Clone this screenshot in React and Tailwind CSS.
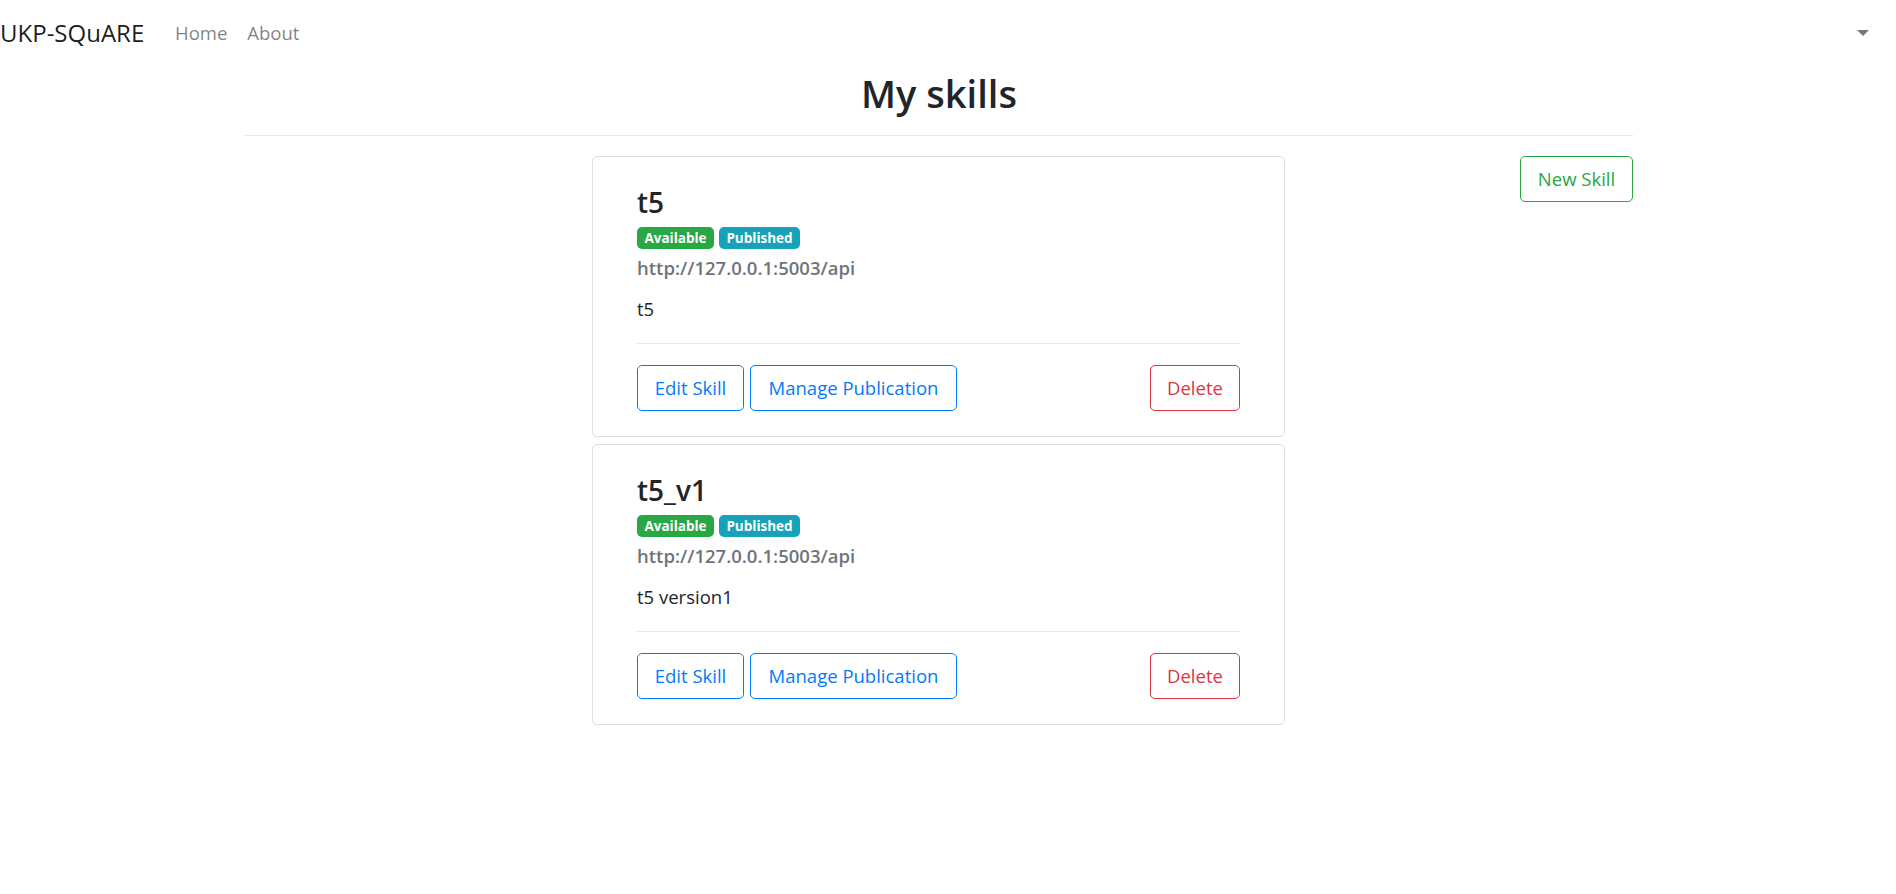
import React from "react";

const skills = [
    { name: "t5", url: "http://127.0.0.1:5003/api", description: "t5" },
    { name: "t5_v1", url: "http://127.0.0.1:5003/api", description: "t5 version1" },
];

const SkillCard = ({ skill }) => (
    <div className="border border-[#dfdfdf] rounded-[5px] bg-white px-[44px] pt-[28px] pb-[25px]">
        <h4 className="text-[28px] leading-[35px] font-semibold text-[#212529]">{skill.name}</h4>
        <div className="flex gap-[5px] mt-[7px]">
            <span className="h-[22px] w-[77px] flex items-center justify-center rounded-[5px] bg-[#28a745] text-white text-[13.5px] font-bold">
                Available
            </span>
            <span className="h-[22px] w-[81px] flex items-center justify-center rounded-[5px] bg-[#17a2b8] text-white text-[13.5px] font-bold">
                Published
            </span>
        </div>
        <div className="mt-[4px] text-[18.5px] leading-[29px] font-semibold text-[#6c757d]">{skill.url}</div>
        <p className="mt-[12px] text-[18.5px] leading-[29px] text-[#212529]">{skill.description}</p>
        <hr className="mt-[20px] border-0 border-t border-[#e5e5e5]" />
        <div className="flex items-center mt-[21px]">
            <button className="w-[107px] h-[46px] border border-[#007bff] text-[#007bff] rounded-[5px] text-[18.5px]">
                Edit Skill
            </button>
            <button className="ml-[6px] w-[207px] h-[46px] border border-[#007bff] text-[#007bff] rounded-[5px] text-[18.5px]">
                Manage Publication
            </button>
            <button className="ml-auto w-[90px] h-[46px] border border-[#dc3545] text-[#dc3545] rounded-[5px] text-[18.5px]">
                Delete
            </button>
        </div>
    </div>
);

const App = () => {
    return (
        <div className="min-h-screen bg-white" style={{ fontFamily: '"Open Sans", "Noto Sans", sans-serif' }}>
            {/* navbar */}
            <nav className="h-[66px] flex items-center">
                <span className="w-[165px] text-[24px] text-black/90">UKP-SQuARE</span>
                <a className="px-[10px] text-[18.5px] text-black/50">Home</a>
                <a className="px-[10px] text-[18.5px] text-black/50">About</a>
                <div className="ml-auto mr-[27px] w-0 h-0 border-x-[6px] border-x-transparent border-t-[6px] border-t-[#777]"></div>
            </nav>

            <div className="ml-[245px] w-[1388px]">
                <h1 className="mt-[4px] text-center text-[38px] leading-[46px] font-semibold text-[#212529]">My skills</h1>
                <hr className="mt-[19px] border-0 border-t border-[#e5e5e5]" />

                <div className="flex mt-[20px]">
                    <div className="w-[347px]"></div>
                    <div className="w-[693px] flex flex-col gap-[7px]">
                        {skills.map((s) => (
                            <SkillCard key={s.name} skill={s} />
                        ))}
                    </div>
                    <div className="flex-1 flex justify-end items-start">
                        <button className="w-[113px] h-[46px] border border-[#28a745] text-[#28a745] rounded-[5px] text-[18.5px]">
                            New Skill
                        </button>
                    </div>
                </div>
            </div>
        </div>
    );
};

export default App;
